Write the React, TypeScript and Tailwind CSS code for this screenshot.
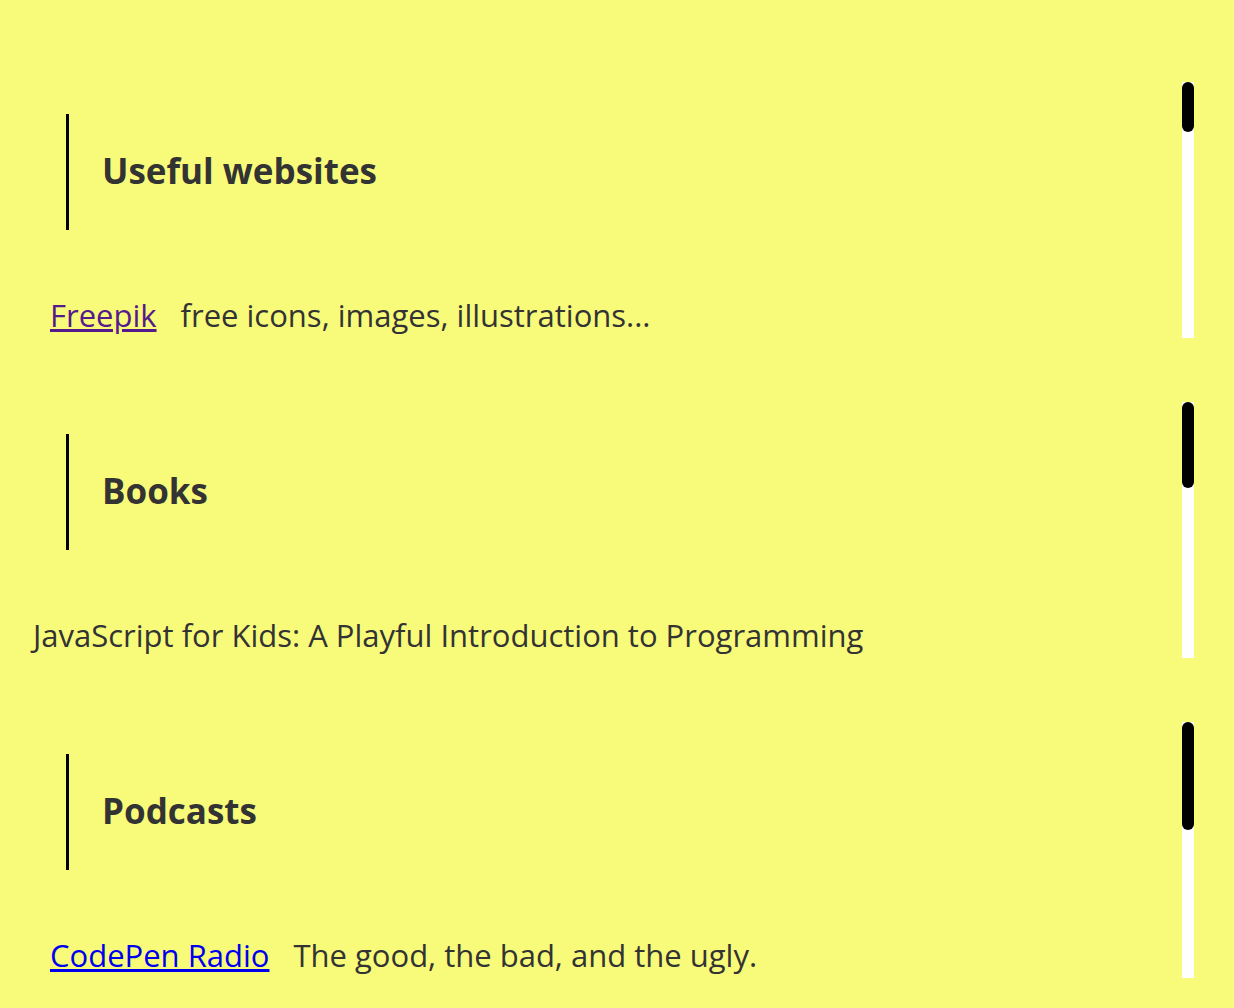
import React from "react";

type Item = { title: string; href?: string; visited?: boolean; note?: string };

const sections: { title: string; thumb: string; items: Item[] }[] = [
  {
    title: "Useful websites",
    thumb: "h-[50px]",
    items: [{ title: "Freepik", href: "#", visited: true, note: "free icons, images, illustrations..." }],
  },
  {
    title: "Books",
    thumb: "h-[86px]",
    items: [{ title: "JavaScript for Kids: A Playful Introduction to Programming" }],
  },
  {
    title: "Podcasts",
    thumb: "h-[108px]",
    items: [{ title: "CodePen Radio", href: "#", note: "The good, the bad, and the ugly." }],
  },
];

export default function App() {
  return (
    <div
      className="min-h-screen bg-[#f8fb7a] pt-[82px] pb-[30px] text-[#333333]"
      style={{ fontFamily: "'Open Sans', sans-serif" }}
    >
      {sections.map((s) => (
        <section key={s.title} className="mr-10 mb-16 flex h-[256px] last:mb-0">
          <div className="flex-1 overflow-hidden pt-8">
            <h2 className="ml-[66px] flex h-[116px] items-center border-l-[3px] border-black pl-[33px] pb-[2px] text-[35px] font-bold">
              {s.title}
            </h2>
            <ul className="mt-[65px]">
              {s.items.map((it) =>
                it.href ? (
                  <li key={it.title} className="ml-[50px] flex items-center gap-6 text-[31px] leading-[40px]">
                    <a
                      href={it.href}
                      className={`underline ${it.visited ? "text-[#551a8b]" : "text-[#0000ee]"}`}
                    >
                      {it.title}
                    </a>
                    <span>{it.note}</span>
                  </li>
                ) : (
                  <li key={it.title} className="ml-[33px] text-[31px] leading-[40px]">
                    {it.title}
                  </li>
                )
              )}
            </ul>
          </div>
          {/* scrollbar */}
          <div className="w-3 bg-white">
            <div className={`${s.thumb} w-3 rounded-full bg-black`} />
          </div>
        </section>
      ))}
    </div>
  );
}
